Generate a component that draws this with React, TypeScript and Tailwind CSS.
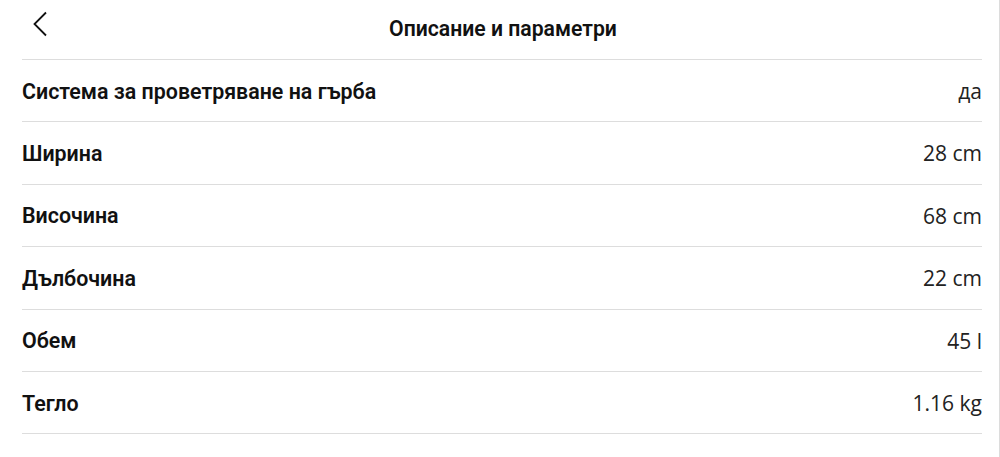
const rows: [string, string][] = [
  ['Система за проветряване на гърба', 'да'],
  ['Ширина', '28 cm'],
  ['Височина', '68 cm'],
  ['Дълбочина', '22 cm'],
  ['Обем', '45 l'],
  ['Тегло', '1.16 kg'],
];

export default function App() {
  return (
    <div className="w-[1000px] h-[457px] bg-white border-r border-[#dcdcdc] overflow-hidden">
      <div className="ml-[22px] mr-[17px]">
        <header className="h-[60px] flex items-center relative border-b border-[#dddddd]">
          <button className="absolute left-[10px] top-[11px] text-[#111]">
            <svg width="16" height="26" viewBox="0 0 16 26" fill="none">
              <path d="M14 1.5 L2.5 13 L14 24.5" stroke="currentColor" strokeWidth="1.8" />
            </svg>
          </button>
          <h1 className="w-full text-center font-['Roboto',sans-serif] font-semibold text-[21.2px] text-[#111] -mt-[1px] pl-[2px]">
            Описание и параметри
          </h1>
        </header>
        {rows.map(([label, value]) => (
          <div
            key={label}
            className="h-[62.4px] flex items-center justify-between border-b border-[#dddddd] pt-[2px]"
          >
            <span className="font-['Roboto',sans-serif] font-semibold text-[21.4px] text-[#111]">{label}</span>
            <span className="font-['Open_Sans',sans-serif] text-[21px] text-[#222]">{value}</span>
          </div>
        ))}
      </div>
    </div>
  );
}
